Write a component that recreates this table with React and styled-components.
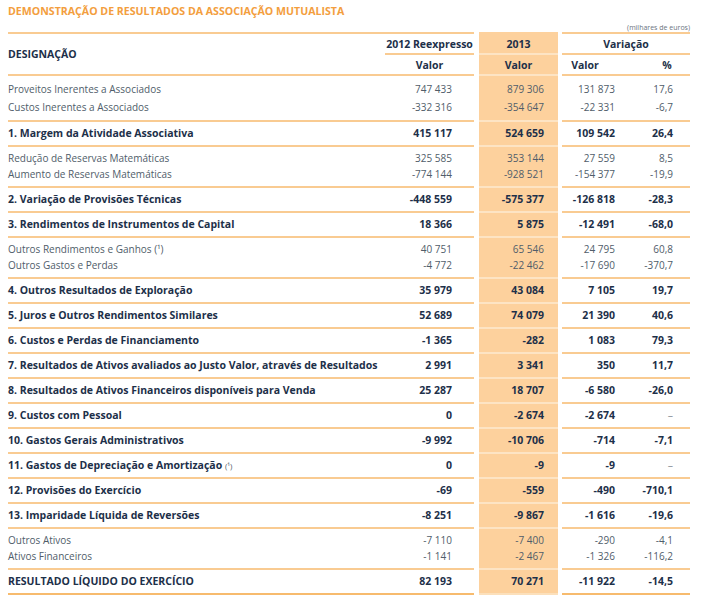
import React from "react";
import styled, { createGlobalStyle } from "styled-components";

const GlobalStyle = createGlobalStyle`
  body {
    margin: 0;
    background: #ffffff;
    font-family: "Open Sans", "Noto Sans", sans-serif;
  }
`;

const LINE = "#f9cb92";
const SOFT = "#fde4c4";
const ORANGE = "#fdd19d";
const INK = "#1d3049";
const GREY = "#505d6a";

// column widths, in px, from the left edge of the table
const COLS = {
  label: { w: 377, ml: 0 },
  prev: { w: 89, ml: 0 },
  cur: { w: 79, ml: 5 },
  val: { w: 62, ml: 4 },
  pct: { w: 66, ml: 0 },
};

const Page = styled.div`
  width: 682px;
  padding: 4px 8px 0 8px;
`;

const Title = styled.h1`
  margin: 0;
  height: 15px;
  font-size: 10.6px;
  line-height: 15px;
  font-weight: 700;
  color: #f39e3e;
`;

const Unit = styled.div`
  margin-top: 5px;
  height: 8px;
  font-size: 7px;
  line-height: 8px;
  text-align: right;
  color: #6b7480;
`;

const Head = styled.div`
  display: grid;
  grid-template-columns: 377px 89px 5px 79px 4px 62px 66px;
  grid-template-rows: 23px 21px;
`;

const HeadCell = styled.div`
  grid-column: ${(p) => p.$col};
  grid-row: ${(p) => p.$row};
  display: flex;
  align-items: center;
  justify-content: ${(p) => (p.$left ? "flex-start" : "center")};
  box-sizing: border-box;
  font-size: 10.5px;
  font-weight: 700;
  color: ${INK};
  background: ${(p) => (p.$hot ? ORANGE : "transparent")};
  border-top: ${(p) => (p.$top ? `2px solid ${p.$hot ? ORANGE : LINE}` : "none")};
  border-bottom: 2px solid ${(p) => (p.$hot ? SOFT : LINE)};
  padding: ${(p) => p.$pad || "0"};
`;

const Row = styled.div`
  display: flex;
`;

const Cell = styled.div`
  box-sizing: border-box;
  width: ${(p) => COLS[p.$col].w}px;
  margin-left: ${(p) => COLS[p.$col].ml}px;
  background: ${(p) => (p.$col === "cur" ? ORANGE : "transparent")};
  border-bottom: 2px solid
    ${(p) => (p.$final ? (p.$col === "cur" ? "#fce0bb" : "#f7bb6e") : p.$col === "cur" ? SOFT : LINE)};
  padding: ${(p) => p.$pad};
  text-align: ${(p) => (p.$col === "label" ? "left" : "right")};
  padding-right: ${(p) => ({ label: 0, prev: 22, cur: 14, val: 9, pct: 17 }[p.$col])}px;
  font-size: ${(p) => (p.$strong ? "10.5px" : "10px")};
  font-weight: ${(p) => (p.$strong ? 700 : 400)};
  color: ${(p) => (p.$strong ? INK : GREY)};
  line-height: ${(p) => p.$lh}px;
  white-space: nowrap;
`;

const Line = styled.div`
  height: ${(p) => p.$lh}px;
`;

const Note = styled.span`
  font-weight: 400;
  font-size: 8px;
  color: ${GREY};
`;

const Dash = styled.span`
  color: #8a929a;
  font-weight: 400;
`;

const groups = [
  {
    kind: "group",
    first: true,
    lines: [
      ["Proveitos Inerentes a Associados", "747 433", "879 306", "131 873", "17,6"],
      ["Custos Inerentes a Associados", "-332 316", "-354 647", "-22 331", "-6,7"],
    ],
  },
  { kind: "total", line: ["1. Margem da Atividade Associativa", "415 117", "524 659", "109 542", "26,4"] },
  {
    kind: "group",
    lines: [
      ["Redução de Reservas Matemáticas", "325 585", "353 144", "27 559", "8,5"],
      ["Aumento de Reservas Matemáticas", "-774 144", "-928 521", "-154 377", "-19,9"],
    ],
  },
  { kind: "total", line: ["2. Variação de Provisões Técnicas", "-448 559", "-575 377", "-126 818", "-28,3"] },
  { kind: "total", line: ["3. Rendimentos de Instrumentos de Capital", "18 366", "5 875", "-12 491", "-68,0"] },
  {
    kind: "group",
    lines: [
      ["Outros Rendimentos e Ganhos (¹)", "40 751", "65 546", "24 795", "60,8"],
      ["Outros Gastos e Perdas", "-4 772", "-22 462", "-17 690", "-370,7"],
    ],
  },
  { kind: "total", line: ["4. Outros Resultados de Exploração", "35 979", "43 084", "7 105", "19,7"] },
  { kind: "total", line: ["5. Juros e Outros Rendimentos Similares", "52 689", "74 079", "21 390", "40,6"] },
  { kind: "total", line: ["6. Custos e Perdas de Financiamento", "-1 365", "-282", "1 083", "79,3"] },
  {
    kind: "total",
    line: ["7. Resultados de Ativos avaliados ao Justo Valor, através de Resultados", "2 991", "3 341", "350", "11,7"],
  },
  {
    kind: "total",
    line: ["8. Resultados de Ativos Financeiros disponíveis para Venda", "25 287", "18 707", "-6 580", "-26,0"],
  },
  { kind: "total", line: ["9. Custos com Pessoal", "0", "-2 674", "-2 674", null] },
  { kind: "total", line: ["10. Gastos Gerais Administrativos", "-9 992", "-10 706", "-714", "-7,1"] },
  {
    kind: "total",
    line: [<>11. Gastos de Depreciação e Amortização <Note>(¹)</Note></>, "0", "-9", "-9", null],
  },
  { kind: "total", line: ["12. Provisões do Exercício", "-69", "-559", "-490", "-710,1"] },
  { kind: "total", line: ["13. Imparidade Líquida de Reversões", "-8 251", "-9 867", "-1 616", "-19,6"] },
  {
    kind: "group",
    lines: [
      ["Outros Ativos", "-7 110", "-7 400", "-290", "-4,1"],
      ["Ativos Financeiros", "-1 141", "-2 467", "-1 326", "-116,2"],
    ],
  },
  {
    kind: "total",
    final: true,
    line: ["RESULTADO LÍQUIDO DO EXERCÍCIO", "82 193", "70 271", "-11 922", "-14,5"],
  },
];

const keys = ["label", "prev", "cur", "val", "pct"];

const show = (v) => (v === null ? <Dash>–</Dash> : v);

const GroupRow = ({ lines, first }) => {
  const lh = first ? 18 : 16;
  const pad = first ? "4px 0 4px" : "3px 0 4px";
  return (
    <Row>
      {keys.map((k, i) => (
        <Cell key={k} $col={k} $pad={pad} $lh={lh}>
          {lines.map((l, j) => (
            <Line key={j} $lh={lh}>
              {show(l[i])}
            </Line>
          ))}
        </Cell>
      ))}
    </Row>
  );
};

const TotalRow = ({ line, final }) => (
  <Row>
    {keys.map((k, i) => (
      <Cell key={k} $col={k} $pad="0" $lh={23} $strong $final={final}>
        {show(line[i])}
      </Cell>
    ))}
  </Row>
);

export default function App() {
  return (
    <>
      <GlobalStyle />
      <Page>
        <Title>DEMONSTRAÇÃO DE RESULTADOS DA ASSOCIAÇÃO MUTUALISTA</Title>
        <Unit>(milhares de euros)</Unit>
        <Head>
          <HeadCell $col="1" $row="1 / 3" $top $left>
            DESIGNAÇÃO
          </HeadCell>
          <HeadCell $col="2" $row="1" $top>
            2012 Reexpresso
          </HeadCell>
          <HeadCell $col="2" $row="2">
            Valor
          </HeadCell>
          <HeadCell $col="4" $row="1" $top $hot>
            2013
          </HeadCell>
          <HeadCell $col="4" $row="2" $hot>
            Valor
          </HeadCell>
          <HeadCell $col="6 / 8" $row="1" $top>
            Variação
          </HeadCell>
          <HeadCell $col="6" $row="2" $pad="0 16px 0 0">
            Valor
          </HeadCell>
          <HeadCell $col="7" $row="2" $pad="0 0 0 20px">
            %
          </HeadCell>
        </Head>
        {groups.map((g, i) =>
          g.kind === "group" ? (
            <GroupRow key={i} lines={g.lines} first={g.first} />
          ) : (
            <TotalRow key={i} line={g.line} final={g.final} />
          )
        )}
      </Page>
    </>
  );
}
